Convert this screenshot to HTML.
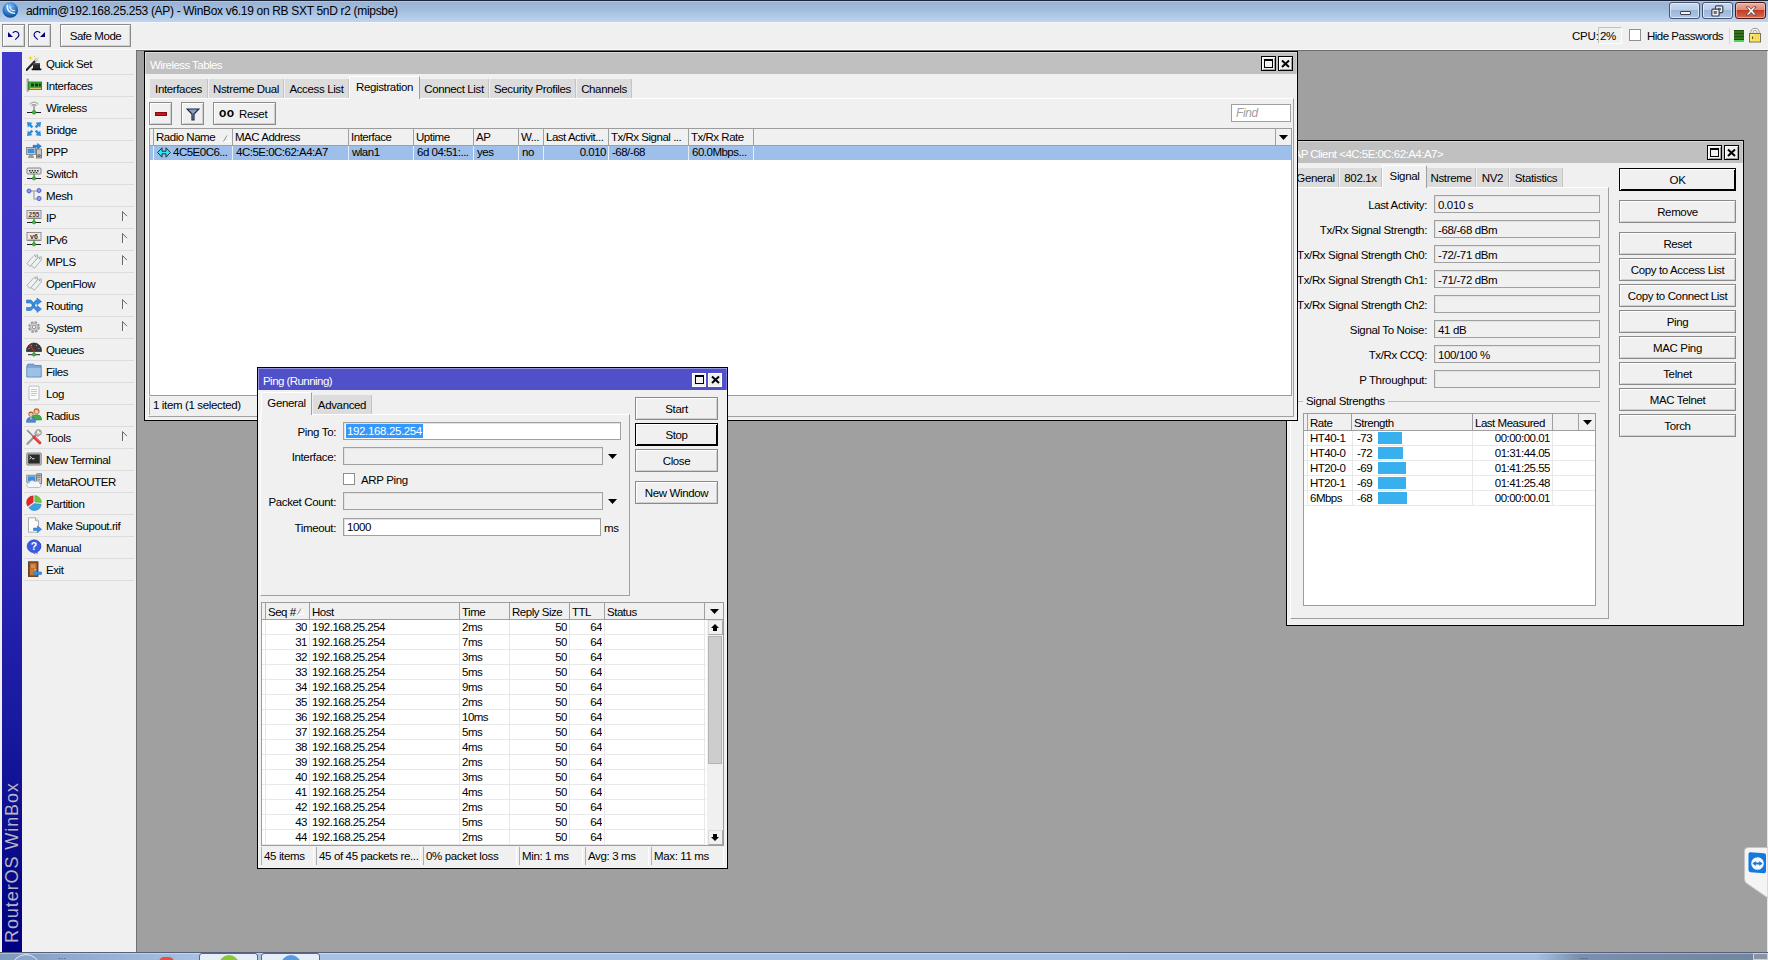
<!DOCTYPE html><html><head><meta charset="utf-8"><title>WinBox</title><style>
*{box-sizing:border-box;margin:0;padding:0}
html,body{width:1768px;height:960px;overflow:hidden}
body{position:relative;background:#a0a0a0;font-family:"Liberation Sans",sans-serif;font-size:11.5px;color:#000;line-height:13px;letter-spacing:-0.36px}
.a{position:absolute}
.t{position:absolute;white-space:nowrap}
.win{position:absolute;border:2px solid #f4f4f4;outline:1px solid #000;outline-offset:-1px;background:#f0f0f0}
.tb{position:absolute;left:-1px;right:-1px;top:-1px;height:22px;background:#c0c0c0;color:#fff;font-size:11.5px;box-shadow:inset 1px 1px 0 rgba(255,255,255,.4),inset -1px 0 0 rgba(255,255,255,.25)}
.tbtn{position:absolute;top:4px;width:15px;height:15px;border:1px solid #000;background:#f0f0f0;box-shadow:inset 1px 1px 0 #fff,inset -1px -1px 0 #a0a0a0}
.btn{position:absolute;border:1px solid #8a8a8a;background:#f0f0f0;box-shadow:inset 1px 1px 0 #fff, inset -1px -1px 0 #d0d0d0;text-align:center}
.tab{position:absolute;background:#dcdcdc;border-right:1px solid #c4c4c4;height:19px;padding-top:4px;text-align:center}
.tabsel{position:absolute;background:#f0f0f0;border-left:1px solid #fff;border-top:1px solid #fff;border-right:1px solid #a0a0a0;text-align:center}
.fld{position:absolute;border:1px solid #a0a0a0;background:#f0f0f0;height:18px;padding:2px 0 0 3px;box-shadow:inset 1px 1px 0 #e3e3e3}
.fldw{background:#fff}
.hdr{position:absolute;background:#f0f0f0;border-right:1px solid #a0a0a0;height:16px;letter-spacing:-0.48px;padding:2px 0 0 2px;overflow:hidden;white-space:nowrap}
.cell{position:absolute;height:15px;overflow:hidden;white-space:nowrap;padding-top:1px;letter-spacing:-0.5px}
.r{text-align:right}
</style></head><body>

<div class="a" style="left:0;top:0;width:1768px;height:22px;background:linear-gradient(#1a2436 0,#1a2436 1px,#b4c6de 1px,#b4c6de 2px,#98b3d4 2px,#a0bbdc 9px,#b0c9e8 16px,#bfd3ec 22px)"></div>
<svg class="a" style="left:2px;top:2px" width="17" height="17" viewBox="0 0 17 17"><defs><radialGradient id="lg" cx="45%" cy="30%" r="75%"><stop offset="0" stop-color="#8cc4f8"/><stop offset="0.55" stop-color="#2c7cd0"/><stop offset="1" stop-color="#0c3c80"/></radialGradient></defs><circle cx="8.3" cy="8" r="7.8" fill="url(#lg)"/><path d="M5.2 3.2 C4.6 8 7.5 11.2 12.6 11.4" fill="none" stroke="#f4faff" stroke-width="1.3" stroke-linecap="round"/><path d="M8 4.2 C7.8 7 9.8 8.8 12.8 8.8" fill="none" stroke="#e4f2ff" stroke-width="1.1" stroke-linecap="round"/></svg>
<div class="t" style="left:26px;top:4px;font-size:12px;line-height:15px;letter-spacing:-0.32px">admin@192.168.25.253 (AP) - WinBox v6.19 on RB SXT 5nD r2 (mipsbe)</div>


<div class="a" style="left:1669px;top:2px;width:31px;height:17px;border:1px solid #43526e;border-radius:3px;box-shadow:inset 0 0 0 1px rgba(235,243,252,.75);background:linear-gradient(#c9daf0,#b9cde9 48%,#9db6d8 48%,#adc6e6)"><div class="a" style="left:10px;top:8px;width:11px;height:4px;background:#f4f4f4;border:1px solid #3c4250;border-radius:1px"></div></div>
<div class="a" style="left:1702px;top:2px;width:31px;height:17px;border:1px solid #43526e;border-radius:3px;box-shadow:inset 0 0 0 1px rgba(235,243,252,.75);background:linear-gradient(#c9daf0,#b9cde9 48%,#9db6d8 48%,#adc6e6)"><svg class="a" style="left:8px;top:2px" width="13" height="12"><rect x="4.5" y="0.8" width="7.3" height="6.8" rx="1" fill="#f0f0f0" stroke="#3c4250" stroke-width="1.2"/><rect x="7.5" y="3.2" width="2" height="1.8" fill="#7a8698" stroke="#3c4250" stroke-width="0.6"/><rect x="0.8" y="4.2" width="7.3" height="6.8" rx="1" fill="#f0f0f0" stroke="#3c4250" stroke-width="1.2"/><rect x="3" y="6.6" width="2.6" height="2" fill="#7a8698" stroke="#3c4250" stroke-width="0.6"/></svg></div>
<div class="a" style="left:1735px;top:2px;width:31px;height:17px;border:1px solid #4c1814;border-radius:3px;box-shadow:inset 0 0 0 1px rgba(255,210,200,.55);background:linear-gradient(#eab0a2,#dd8672 48%,#c43a22 48%,#d66a50)"><svg class="a" style="left:9px;top:3px" width="13" height="10"><path d="M1.2 0.8 L4 0.8 L6.2 3.2 L8.4 0.8 L11.2 0.8 L7.8 4.8 L11.4 9 L8.4 9 L6.2 6.4 L4 9 L1 9 L4.6 4.8 Z" fill="#fbfbfb" stroke="#5a3a38" stroke-width="0.8"/></svg></div>


<div class="a" style="left:0;top:22px;width:1768px;height:28px;background:#f0f0f0"></div>
<div class="btn" style="left:2px;top:24px;width:23px;height:23px"><svg class="a" style="left:0;top:0" width="21" height="21"><path d="M5 7 L5 12 L10 12 Z" fill="#000080"/><path d="M9.8 8 C11 6.2 13.4 6 14.8 7.4 C16.4 9 16.2 10.8 14.6 12.4 L12.2 14.6" fill="none" stroke="#000080" stroke-width="1.15"/></svg></div>
<div class="btn" style="left:28px;top:24px;width:23px;height:23px"><svg class="a" style="left:0;top:0" width="21" height="21"><path d="M16 7 L16 12 L11 12 Z" fill="#000080"/><path d="M11.2 8 C10 6.2 7.6 6 6.2 7.4 C4.6 9 4.8 10.8 6.4 12.4 L8.8 14.6" fill="none" stroke="#000080" stroke-width="1.15"/></svg></div>
<div class="btn" style="left:60px;top:24px;width:71px;height:23px;padding-top:5px;font-size:11.5px;letter-spacing:-0.45px">Safe Mode</div>
<div class="a" style="left:1598px;top:27px;width:24px;height:17px;border:1px solid #c0c0c0;border-right-color:#fff;border-bottom-color:#fff"></div>
<div class="t" style="left:1572px;top:30px;letter-spacing:-0.2px">CPU:</div>
<div class="t" style="left:1600px;top:30px">2%</div>
<div class="a" style="left:1629px;top:29px;width:12px;height:12px;background:#fff;border:1px solid #8e8f8f"></div>
<div class="t" style="left:1647px;top:30px;letter-spacing:-0.5px">Hide Passwords</div>
<div class="a" style="left:1729px;top:28px;width:1px;height:16px;background:#d4d4dc"></div>
<div class="a" style="left:1734px;top:30px;width:10px;height:12px;background:repeating-linear-gradient(#1a5406 0,#1a5406 1px,#3a6e20 1px,#3a6e20 3px);border-bottom:2px solid #4fd64f"></div>
<svg class="a" style="left:1748px;top:27px" width="14" height="16"><path d="M3 7 L3 4.2 C3 0.6 11 0.6 11 4.2 L11 7" fill="none" stroke="#8a8a8a" stroke-width="1"/><path d="M5 7 L5 4.8 C5 2.8 9 2.8 9 4.8 L9 7" fill="none" stroke="#8a8a8a" stroke-width="1"/><path d="M4 7 L4 4.4 C4 1.8 10 1.8 10 4.4 L10 7" fill="none" stroke="#fff" stroke-width="1"/><rect x="1.5" y="6.5" width="11" height="8.5" fill="#fbe56c" stroke="#7a7258" stroke-width="1"/><rect x="7" y="7" width="1.2" height="7.5" fill="#f4d040"/><rect x="9.6" y="7" width="1.2" height="7.5" fill="#f4d040"/><rect x="4" y="9.5" width="1.2" height="2.6" fill="#6a5a10"/></svg>

<div class="a" style="left:0;top:50px;width:136px;height:902px;background:#f0f0f0"></div>
<div class="a" style="left:2px;top:52px;width:20px;height:900px;background:linear-gradient(#4038c8,#3830c0 40%,#1818a0 75%,#000080)"></div>
<div class="a" style="left:136px;top:50px;width:1px;height:902px;background:#727272"></div>
<div class="t" style="left:2px;top:943px;width:170px;height:20px;transform-origin:0 0;transform:rotate(-90deg);color:#b4b4d0;font-size:18px;line-height:20px;letter-spacing:0.92px;text-shadow:1px 1px 0 #10105a">RouterOS WinBox</div>
<div class="t" style="left:46px;top:58px;font-size:11.5px;letter-spacing:-0.42px">Quick Set</div>
<div class="a" style="left:24px;top:74px;width:110px;height:1px;background:#dcdcdc"></div>
<svg class="a" style="left:26px;top:55px" width="16" height="16" viewBox="0 0 16 16"><path d="M0.5 15 L10.5 4.5" stroke="#222" stroke-width="2.2" stroke-linecap="round"/><path d="M9.5 5.5 L12 3" stroke="#ddd" stroke-width="2" stroke-linecap="round"/>
<rect x="7" y="8.5" width="7" height="6" fill="#2a2a2a"/><rect x="5.5" y="13.5" width="10" height="1.8" rx="0.8" fill="#111"/><rect x="7" y="8" width="7" height="1.5" fill="#555"/>
<path d="M4.5 0.5 L5.2 2.3 L7 3 L5.2 3.7 L4.5 5.5 L3.8 3.7 L2 3 L3.8 2.3Z" fill="#f2d43a"/><circle cx="8.5" cy="1.5" r="0.8" fill="#f2d43a"/><circle cx="13" cy="6" r="0.7" fill="#e8e8a0"/></svg>
<div class="t" style="left:46px;top:80px;font-size:11.5px;letter-spacing:-0.42px">Interfaces</div>
<div class="a" style="left:24px;top:96px;width:110px;height:1px;background:#dcdcdc"></div>
<svg class="a" style="left:26px;top:77px" width="16" height="16" viewBox="0 0 16 16"><rect x="1" y="2" width="1.6" height="12.5" fill="#b8b8b8" stroke="#808080" stroke-width="0.5"/><rect x="2.6" y="5" width="13" height="7.5" fill="#3fae3f" stroke="#1c7a1c" stroke-width="0.8"/>
<rect x="5" y="6.5" width="3" height="3" fill="#1a3a1a"/><rect x="9" y="6.5" width="3" height="3" fill="#1a3a1a"/><rect x="12.8" y="6.5" width="2" height="3" fill="#1a3a1a"/><rect x="4" y="11" width="11" height="1.2" fill="#d8c860"/></svg>
<div class="t" style="left:46px;top:102px;font-size:11.5px;letter-spacing:-0.42px">Wireless</div>
<div class="a" style="left:24px;top:118px;width:110px;height:1px;background:#dcdcdc"></div>
<svg class="a" style="left:26px;top:99px" width="16" height="16" viewBox="0 0 16 16"><path d="M3.5 5.5 A5.5 5.5 0 0 1 12.5 5.5" fill="none" stroke="#aaa" stroke-width="1.2"/><path d="M5.5 6.8 A3.2 3.2 0 0 1 10.5 6.8" fill="none" stroke="#999" stroke-width="1.1"/>
<rect x="7.4" y="6.5" width="1.3" height="6" fill="#888"/><rect x="1" y="13" width="14" height="1" fill="#222"/><circle cx="8" cy="13.3" r="1.9" fill="#3cb83c" stroke="#1c7a1c" stroke-width="0.5"/></svg>
<div class="t" style="left:46px;top:124px;font-size:11.5px;letter-spacing:-0.42px">Bridge</div>
<div class="a" style="left:24px;top:140px;width:110px;height:1px;background:#dcdcdc"></div>
<svg class="a" style="left:26px;top:121px" width="16" height="16" viewBox="0 0 16 16"><g fill="#2b8ede"><path d="M1 1 L6.5 1.8 L5 3.3 L7.2 5.5 L5.5 7.2 L3.3 5 L1.8 6.5Z"/><path d="M15 1 L14.2 6.5 L12.7 5 L10.5 7.2 L8.8 5.5 L11 3.3 L9.5 1.8Z"/><path d="M1 15 L1.8 9.5 L3.3 11 L5.5 8.8 L7.2 10.5 L5 12.7 L6.5 14.2Z"/><path d="M15 15 L9.5 14.2 L11 12.7 L8.8 10.5 L10.5 8.8 L12.7 11 L14.2 9.5Z"/></g></svg>
<div class="t" style="left:46px;top:146px;font-size:11.5px;letter-spacing:-0.42px">PPP</div>
<div class="a" style="left:24px;top:162px;width:110px;height:1px;background:#dcdcdc"></div>
<svg class="a" style="left:26px;top:143px" width="16" height="16" viewBox="0 0 16 16"><rect x="0.5" y="4.5" width="9" height="7" fill="#d8d8d8" stroke="#777" stroke-width="0.8"/><rect x="1.6" y="5.6" width="6.8" height="4.6" fill="#3a8fe0"/><rect x="3" y="12" width="4" height="1.5" fill="#999"/><rect x="2" y="13.5" width="6" height="1.2" fill="#777"/>
<rect x="10.5" y="6" width="5" height="9" fill="#c8c8c8" stroke="#666" stroke-width="0.8"/><rect x="11.5" y="11.5" width="3" height="2.3" fill="#4a4a4a"/><rect x="12" y="12.2" width="2" height="0.8" fill="#5cc85c"/>
<path d="M7 2.2 L11.5 2.2 L11.5 0.4 L15.5 3.2 L11.5 6 L11.5 4.2 L7 4.2Z" fill="#2f7fd6" stroke="#1a5aa8" stroke-width="0.4"/></svg>
<div class="t" style="left:46px;top:168px;font-size:11.5px;letter-spacing:-0.42px">Switch</div>
<div class="a" style="left:24px;top:184px;width:110px;height:1px;background:#dcdcdc"></div>
<svg class="a" style="left:26px;top:165px" width="16" height="16" viewBox="0 0 16 16"><rect x="1" y="3" width="14" height="6" rx="1" fill="#e4e4e4" stroke="#777" stroke-width="0.9"/><g fill="#333"><rect x="3" y="5" width="1.5" height="1.5"/><rect x="5.7" y="5" width="1.5" height="1.5"/><rect x="8.4" y="5" width="1.5" height="1.5"/><rect x="11.1" y="5" width="1.5" height="1.5"/><rect x="4.3" y="7" width="1.5" height="1"/><rect x="7" y="7" width="1.5" height="1"/><rect x="9.8" y="7" width="1.5" height="1"/></g>
<rect x="7.4" y="9" width="1.3" height="4" fill="#2c9c2c"/><rect x="1" y="13" width="14" height="1" fill="#222"/><circle cx="8" cy="13.4" r="1.7" fill="#3cb83c" stroke="#1c7a1c" stroke-width="0.5"/></svg>
<div class="t" style="left:46px;top:190px;font-size:11.5px;letter-spacing:-0.42px">Mesh</div>
<div class="a" style="left:24px;top:206px;width:110px;height:1px;background:#dcdcdc"></div>
<svg class="a" style="left:26px;top:187px" width="16" height="16" viewBox="0 0 16 16"><path d="M3 4 L12.5 4 M8 4 L8 12 L12.5 12" fill="none" stroke="#999" stroke-width="1.1"/><circle cx="3" cy="4" r="2" fill="#8c9cf0" stroke="#4858c8" stroke-width="0.9"/><circle cx="13" cy="3.5" r="2" fill="#8c9cf0" stroke="#4858c8" stroke-width="0.9"/><circle cx="13" cy="11.5" r="2.1" fill="#8c9cf0" stroke="#4858c8" stroke-width="0.9"/></svg>
<div class="t" style="left:46px;top:212px;font-size:11.5px;letter-spacing:-0.42px">IP</div>
<div class="a" style="left:24px;top:228px;width:110px;height:1px;background:#dcdcdc"></div>
<svg class="a" style="left:26px;top:209px" width="16" height="16" viewBox="0 0 16 16"><rect x="1" y="1.5" width="14" height="8" fill="#ececec" stroke="#888" stroke-width="0.9"/><text x="8" y="8" font-family="Liberation Sans" font-size="6.5" font-weight="bold" text-anchor="middle" fill="#444" letter-spacing="0">255</text><rect x="2" y="8.6" width="12" height="0.8" fill="#777"/>
<rect x="7.4" y="9.5" width="1.3" height="3.5" fill="#2c9c2c"/><rect x="1" y="13" width="14" height="1" fill="#222"/><circle cx="8" cy="13.3" r="1.7" fill="#3cb83c" stroke="#1c7a1c" stroke-width="0.5"/></svg>
<svg class="a" style="left:122px;top:211px" width="6" height="11"><path d="M0.5 10.2 L5 5.4" fill="none" stroke="#fff" stroke-width="1"/><path d="M0.5 10 L0.5 0.5 L5 5.2" fill="none" stroke="#686868" stroke-width="1"/></svg>
<div class="t" style="left:46px;top:234px;font-size:11.5px;letter-spacing:-0.42px">IPv6</div>
<div class="a" style="left:24px;top:250px;width:110px;height:1px;background:#dcdcdc"></div>
<svg class="a" style="left:26px;top:231px" width="16" height="16" viewBox="0 0 16 16"><rect x="1" y="1.5" width="14" height="8" fill="#ececec" stroke="#888" stroke-width="0.9"/><text x="8" y="7.6" font-family="Liberation Sans" font-size="7" font-weight="bold" text-anchor="middle" fill="#333" letter-spacing="0">v6</text><rect x="2" y="8.6" width="12" height="0.8" fill="#777"/>
<rect x="7.4" y="9.5" width="1.3" height="3.5" fill="#2c9c2c"/><rect x="1" y="13" width="14" height="1" fill="#222"/><circle cx="8" cy="13.3" r="1.7" fill="#3cb83c" stroke="#1c7a1c" stroke-width="0.5"/></svg>
<svg class="a" style="left:122px;top:233px" width="6" height="11"><path d="M0.5 10.2 L5 5.4" fill="none" stroke="#fff" stroke-width="1"/><path d="M0.5 10 L0.5 0.5 L5 5.2" fill="none" stroke="#686868" stroke-width="1"/></svg>
<div class="t" style="left:46px;top:256px;font-size:11.5px;letter-spacing:-0.42px">MPLS</div>
<div class="a" style="left:24px;top:272px;width:110px;height:1px;background:#dcdcdc"></div>
<svg class="a" style="left:26px;top:253px" width="16" height="16" viewBox="0 0 16 16"><g fill="#eef2f2" stroke="#9aa4a4" stroke-width="0.8"><path d="M0.8 10.5 L8 2.5 L11.5 1.8 L11.5 5 L4.5 13.5Z"/><path d="M5 12.5 L12 4.5 L15.3 3.8 L15.3 7 L8.5 15.2Z"/></g><circle cx="9.8" cy="3.6" r="0.7" fill="#888"/><circle cx="13.7" cy="5.6" r="0.7" fill="#888"/></svg>
<svg class="a" style="left:122px;top:255px" width="6" height="11"><path d="M0.5 10.2 L5 5.4" fill="none" stroke="#fff" stroke-width="1"/><path d="M0.5 10 L0.5 0.5 L5 5.2" fill="none" stroke="#686868" stroke-width="1"/></svg>
<div class="t" style="left:46px;top:278px;font-size:11.5px;letter-spacing:-0.42px">OpenFlow</div>
<div class="a" style="left:24px;top:294px;width:110px;height:1px;background:#dcdcdc"></div>
<svg class="a" style="left:26px;top:275px" width="16" height="16" viewBox="0 0 16 16"><g fill="#eef2f2" stroke="#9aa4a4" stroke-width="0.8"><path d="M0.8 10.5 L8 2.5 L11.5 1.8 L11.5 5 L4.5 13.5Z"/><path d="M5 12.5 L12 4.5 L15.3 3.8 L15.3 7 L8.5 15.2Z"/></g><circle cx="9.8" cy="3.6" r="0.7" fill="#888"/><circle cx="13.7" cy="5.6" r="0.7" fill="#888"/></svg>
<div class="t" style="left:46px;top:300px;font-size:11.5px;letter-spacing:-0.42px">Routing</div>
<div class="a" style="left:24px;top:316px;width:110px;height:1px;background:#dcdcdc"></div>
<svg class="a" style="left:26px;top:297px" width="16" height="16" viewBox="0 0 16 16"><g fill="#3a8ee0" stroke="#1c62b4" stroke-width="0.5"><path d="M0.5 3 L4.5 3 C7 3 8.5 10.5 11 10.5 L11 8.5 L15.5 12 L11 15.5 L11 13.5 C7.5 13.5 6.5 6 4 6 L0.5 6Z"/><path d="M0.5 10.5 L4 10.5 C6.5 10.5 7.5 3 11 3 L11 1 L15.5 4.5 L11 8 L11 6 C8.5 6 7 13.5 4.5 13.5 L0.5 13.5Z"/></g></svg>
<svg class="a" style="left:122px;top:299px" width="6" height="11"><path d="M0.5 10.2 L5 5.4" fill="none" stroke="#fff" stroke-width="1"/><path d="M0.5 10 L0.5 0.5 L5 5.2" fill="none" stroke="#686868" stroke-width="1"/></svg>
<div class="t" style="left:46px;top:322px;font-size:11.5px;letter-spacing:-0.42px">System</div>
<div class="a" style="left:24px;top:338px;width:110px;height:1px;background:#dcdcdc"></div>
<svg class="a" style="left:26px;top:319px" width="16" height="16" viewBox="0 0 16 16"><g fill="none" stroke="#9a9a9a"><circle cx="8" cy="8" r="4.6" stroke-width="2.6" stroke-dasharray="2.4 1.2"/><circle cx="8" cy="8" r="3.6" stroke-width="1.6" stroke="#b4b4b4"/><circle cx="8" cy="8" r="1.8" stroke-width="1" stroke="#8a8a8a"/></g></svg>
<svg class="a" style="left:122px;top:321px" width="6" height="11"><path d="M0.5 10.2 L5 5.4" fill="none" stroke="#fff" stroke-width="1"/><path d="M0.5 10 L0.5 0.5 L5 5.2" fill="none" stroke="#686868" stroke-width="1"/></svg>
<div class="t" style="left:46px;top:344px;font-size:11.5px;letter-spacing:-0.42px">Queues</div>
<div class="a" style="left:24px;top:360px;width:110px;height:1px;background:#dcdcdc"></div>
<svg class="a" style="left:26px;top:341px" width="16" height="16" viewBox="0 0 16 16"><path d="M0.5 9.5 A7.5 7.5 0 0 1 15.5 9.5 L15.5 10.5 L0.5 10.5Z" fill="#3a3a3a" stroke="#111" stroke-width="0.6"/><path d="M8 9.8 L3.5 4" stroke="#e02020" stroke-width="1.3"/><g fill="#ccc"><circle cx="3" cy="7.5" r="0.5"/><circle cx="5.5" cy="4.3" r="0.5"/><circle cx="10.5" cy="4.3" r="0.5"/><circle cx="13" cy="7.5" r="0.5"/></g>
<rect x="7.4" y="10.5" width="1.3" height="2.5" fill="#2c9c2c"/><rect x="2" y="13.2" width="12" height="1" fill="#222"/><circle cx="8" cy="13.5" r="1.7" fill="#3cb83c" stroke="#1c7a1c" stroke-width="0.5"/></svg>
<div class="t" style="left:46px;top:366px;font-size:11.5px;letter-spacing:-0.42px">Files</div>
<div class="a" style="left:24px;top:382px;width:110px;height:1px;background:#dcdcdc"></div>
<svg class="a" style="left:26px;top:363px" width="16" height="16" viewBox="0 0 16 16"><path d="M0.8 3.2 L0.8 14 L15.2 14 L15.2 2.5 L9 2.5 L7.5 1.2 L1.8 1.2 Z" fill="#7da7d4" stroke="#4a78ac" stroke-width="0.8"/><path d="M1.3 5 L14.7 5 L14.7 13.5 L1.3 13.5Z" fill="#9cc0e6"/></svg>
<div class="t" style="left:46px;top:388px;font-size:11.5px;letter-spacing:-0.42px">Log</div>
<div class="a" style="left:24px;top:404px;width:110px;height:1px;background:#dcdcdc"></div>
<svg class="a" style="left:26px;top:385px" width="16" height="16" viewBox="0 0 16 16"><path d="M3 1.5 L4 0.8 L5 1.5 L6 0.8 L7 1.5 L8 0.8 L9 1.5 L10 0.8 L11 1.5 L12 0.8 L13 1.5 L13 14.5 L12 15.2 L11 14.5 L10 15.2 L9 14.5 L8 15.2 L7 14.5 L6 15.2 L5 14.5 L4 15.2 L3 14.5Z" fill="#fafafa" stroke="#a8a8a8" stroke-width="0.7"/><g stroke="#b8b8c0" stroke-width="0.8"><path d="M5 4.5 L11 4.5 M5 6.5 L11 6.5 M5 8.5 L11 8.5 M5 10.5 L9.5 10.5"/></g></svg>
<div class="t" style="left:46px;top:410px;font-size:11.5px;letter-spacing:-0.42px">Radius</div>
<div class="a" style="left:24px;top:426px;width:110px;height:1px;background:#dcdcdc"></div>
<svg class="a" style="left:26px;top:407px" width="16" height="16" viewBox="0 0 16 16"><circle cx="10.5" cy="4.2" r="3" fill="#c06828"/><circle cx="10.5" cy="4.8" r="2" fill="#f0c8a0"/><path d="M5.5 13 C5.5 9 8 7.8 10.5 7.8 C13 7.8 15.5 9 15.5 12 L15.5 13Z" fill="#3fae4a" stroke="#1e7a2a" stroke-width="0.5"/>
<circle cx="5" cy="7" r="2.6" fill="#a85a20"/><circle cx="5" cy="7.6" r="1.8" fill="#f0c8a0"/><path d="M0.5 15.3 C0.5 11.5 2.5 10.3 5 10.3 C7.5 10.3 9.5 11.5 9.5 15.3Z" fill="#4a8ad8" stroke="#2a5aa8" stroke-width="0.5"/><path d="M4.4 10.5 L5 13 L5.6 10.5Z" fill="#fff"/></svg>
<div class="t" style="left:46px;top:432px;font-size:11.5px;letter-spacing:-0.42px">Tools</div>
<div class="a" style="left:24px;top:448px;width:110px;height:1px;background:#dcdcdc"></div>
<svg class="a" style="left:26px;top:429px" width="16" height="16" viewBox="0 0 16 16"><path d="M1.5 14.8 L10 6" stroke="#9a9a9a" stroke-width="2.2" stroke-linecap="round"/><path d="M9.5 3 A3 3 0 1 1 13 6.5 L11.5 7.5 L8.5 4.5Z" fill="#b0b0b0" stroke="#777" stroke-width="0.6"/><path d="M12 1.5 L12 4 L14.5 4" fill="none" stroke="#f0f0f0" stroke-width="1.6"/>
<path d="M1.5 1.5 L8 8" stroke="#888" stroke-width="1.6" stroke-linecap="round"/><path d="M8 8 L13.8 13.8" stroke="#e03030" stroke-width="3" stroke-linecap="round"/><path d="M8.6 8 L14 13.4" stroke="#f08080" stroke-width="0.8"/></svg>
<svg class="a" style="left:122px;top:431px" width="6" height="11"><path d="M0.5 10.2 L5 5.4" fill="none" stroke="#fff" stroke-width="1"/><path d="M0.5 10 L0.5 0.5 L5 5.2" fill="none" stroke="#686868" stroke-width="1"/></svg>
<div class="t" style="left:46px;top:454px;font-size:11.5px;letter-spacing:-0.42px">New Terminal</div>
<div class="a" style="left:24px;top:470px;width:110px;height:1px;background:#dcdcdc"></div>
<svg class="a" style="left:26px;top:451px" width="16" height="16" viewBox="0 0 16 16"><rect x="0.8" y="2" width="14.4" height="12" rx="0.8" fill="#c8c8c8" stroke="#6a6a6a" stroke-width="0.8"/><rect x="2.2" y="3.4" width="11.6" height="9.2" fill="#2a2a2a"/><path d="M3.5 5 L5.5 6.5 L3.5 8" fill="none" stroke="#fff" stroke-width="0.9"/><rect x="6" y="7.3" width="2.5" height="0.9" fill="#fff"/></svg>
<div class="t" style="left:46px;top:476px;font-size:11.5px;letter-spacing:-0.42px">MetaROUTER</div>
<div class="a" style="left:24px;top:492px;width:110px;height:1px;background:#dcdcdc"></div>
<svg class="a" style="left:26px;top:473px" width="16" height="16" viewBox="0 0 16 16"><rect x="0.8" y="2.2" width="9.5" height="7" fill="#d8d8d8" stroke="#777" stroke-width="0.8"/><rect x="1.9" y="3.3" width="7.3" height="4.8" fill="#3a8fe0"/><rect x="10.8" y="0.8" width="4.6" height="10" fill="#c4c4c4" stroke="#666" stroke-width="0.8"/><path d="M11.6 2.5 L14.6 2.5 M11.6 4.2 L14.6 4.2" stroke="#666" stroke-width="0.8"/><rect x="12.5" y="6" width="1.4" height="1.4" fill="#c88020"/>
<path d="M2.5 14.5 A2.4 2.4 0 0 1 3.2 9.8 A3.2 3.2 0 0 1 9 9 A2.8 2.8 0 0 1 13.8 10.8 A2 2 0 0 1 13.5 14.5Z" fill="#f4f6fa" stroke="#a0a8b8" stroke-width="0.7"/></svg>
<div class="t" style="left:46px;top:498px;font-size:11.5px;letter-spacing:-0.42px">Partition</div>
<div class="a" style="left:24px;top:514px;width:110px;height:1px;background:#dcdcdc"></div>
<svg class="a" style="left:26px;top:495px" width="16" height="16" viewBox="0 0 16 16"><path d="M7.2 7.2 L7.2 0.8 A6.6 6.6 0 0 0 1.8 11.2Z" fill="#e02828" stroke="#a81818" stroke-width="0.4"/><path d="M8.8 7 L8.8 0.6 A6.8 6.8 0 0 1 15.4 7.6Z" fill="#6cc83c" stroke="#3c9018" stroke-width="0.4"/><path d="M8.2 8.6 L15.2 9.2 A6.8 6.8 0 0 1 2.8 12.6Z" fill="#3aa0e0" stroke="#1c70b0" stroke-width="0.4"/></svg>
<div class="t" style="left:46px;top:520px;font-size:11.5px;letter-spacing:-0.42px">Make Supout.rif</div>
<div class="a" style="left:24px;top:536px;width:110px;height:1px;background:#dcdcdc"></div>
<svg class="a" style="left:26px;top:517px" width="16" height="16" viewBox="0 0 16 16"><path d="M2.5 0.8 L9.5 0.8 L12.5 3.8 L12.5 15.2 L2.5 15.2Z" fill="#fbfbfb" stroke="#9a9a9a" stroke-width="0.8"/><path d="M9.5 0.8 L9.5 3.8 L12.5 3.8" fill="#e0e0e0" stroke="#9a9a9a" stroke-width="0.7"/><path d="M7.5 11 L11.5 11 L11.5 9 L15.6 12.2 L11.5 15.4 L11.5 13.4 L7.5 13.4Z" fill="#3a90e4" stroke="#1c62b4" stroke-width="0.5"/></svg>
<div class="t" style="left:46px;top:542px;font-size:11.5px;letter-spacing:-0.42px">Manual</div>
<div class="a" style="left:24px;top:558px;width:110px;height:1px;background:#dcdcdc"></div>
<svg class="a" style="left:26px;top:539px" width="16" height="16" viewBox="0 0 16 16"><path d="M8 0.8 A6.8 6.4 0 1 1 5.5 13 L9.5 15.6 L9 13.4 A6.8 6.4 0 0 0 8 0.8Z" fill="#3858d8"/><ellipse cx="8" cy="7.2" rx="6.9" ry="6.4" fill="#3a5ce0" stroke="#2038a8" stroke-width="0.5"/><path d="M9 12.5 L11.5 15.6 L11.5 12.2Z" fill="#3a5ce0"/><text x="8" y="11.2" font-family="Liberation Sans" font-weight="bold" font-size="10.5" text-anchor="middle" fill="#fff" letter-spacing="0">?</text></svg>
<div class="t" style="left:46px;top:564px;font-size:11.5px;letter-spacing:-0.42px">Exit</div>
<div class="a" style="left:24px;top:580px;width:110px;height:1px;background:#dcdcdc"></div>
<svg class="a" style="left:26px;top:561px" width="16" height="16" viewBox="0 0 16 16"><rect x="2.5" y="0.8" width="9.5" height="14.6" fill="#8a4a20" stroke="#5a2c10" stroke-width="0.8"/><rect x="4" y="2.2" width="6.5" height="12" fill="#c87838"/><rect x="4.8" y="3" width="4.9" height="4.5" fill="#d88c48" stroke="#a05a24" stroke-width="0.4"/><circle cx="9.3" cy="8.8" r="0.8" fill="#f0e080"/>
<path d="M15.5 11 L11 11 L11 9.2 L7 12.2 L11 15.2 L11 13.4 L15.5 13.4Z" fill="#3a90e4" stroke="#1c62b4" stroke-width="0.5"/></svg>
<div class="win" style="left:1286px;top:140px;width:458px;height:486px">
<div class="tb"><div class="t" style="left:6.5px;top:7px;letter-spacing:-0.52px">AP Client &lt;4C:5E:0C:62:A4:A7&gt;</div></div>
<div class="tbtn" style="left:419px;top:3px"><svg class="a" style="left:2px;top:2px" width="9" height="9"><rect x="0.5" y="1" width="8" height="7.5" fill="none" stroke="#000" stroke-width="1"/><rect x="0" y="0" width="9" height="2" fill="#000"/></svg></div><div class="tbtn" style="left:436px;top:3px"><svg class="a" style="left:2px;top:2px" width="9" height="9"><path d="M1 1.5 L8 8 M8 1.5 L1 8" stroke="#000" stroke-width="2"/></svg></div>
<div class="a" style="left:2px;top:45px;width:319px;height:432px;border:1px solid #a0a0a0;border-left-color:#fff;border-top-color:#fff;background:#f0f0f0"></div>
<div class="tab" style="left:5px;top:26px;width:46px">General</div>
<div class="tab" style="left:52px;top:26px;width:42px">802.1x</div>
<div class="tabsel" style="left:94px;top:23px;width:45px;height:23px;padding-top:4px">Signal</div>
<div class="tab" style="left:139px;top:26px;width:49px">Nstreme</div>
<div class="tab" style="left:189px;top:26px;width:32px">NV2</div>
<div class="tab" style="left:222px;top:26px;width:53px">Statistics</div>
<div class="t r" style="left:2px;width:137px;top:57px">Last Activity:</div>
<div class="fld" style="left:146px;top:53px;width:166px;padding-top:3px">0.010 s</div>
<div class="t r" style="left:2px;width:137px;top:82px">Tx/Rx Signal Strength:</div>
<div class="fld" style="left:146px;top:78px;width:166px;padding-top:3px">-68/-68 dBm</div>
<div class="t r" style="left:2px;width:137px;top:107px">Tx/Rx Signal Strength Ch0:</div>
<div class="fld" style="left:146px;top:103px;width:166px;padding-top:3px">-72/-71 dBm</div>
<div class="t r" style="left:2px;width:137px;top:132px">Tx/Rx Signal Strength Ch1:</div>
<div class="fld" style="left:146px;top:128px;width:166px;padding-top:3px">-71/-72 dBm</div>
<div class="t r" style="left:2px;width:137px;top:157px">Tx/Rx Signal Strength Ch2:</div>
<div class="fld" style="left:146px;top:153px;width:166px;padding-top:3px"></div>
<div class="t r" style="left:2px;width:137px;top:182px">Signal To Noise:</div>
<div class="fld" style="left:146px;top:178px;width:166px;padding-top:3px">41 dB</div>
<div class="t r" style="left:2px;width:137px;top:207px">Tx/Rx CCQ:</div>
<div class="fld" style="left:146px;top:203px;width:166px;padding-top:3px">100/100 %</div>
<div class="t r" style="left:2px;width:137px;top:232px">P Throughput:</div>
<div class="fld" style="left:146px;top:228px;width:166px;padding-top:3px"></div>
<div class="a" style="left:10px;top:259px;width:302px;height:1px;background:#bdbdbd"></div>
<div class="t" style="left:15px;top:253px;background:#f0f0f0;padding:0 3px">Signal Strengths</div>
<div class="a" style="left:15px;top:271px;width:293px;height:193px;border:1px solid #9c9c9c;background:#fff"></div>
<div class="a" style="left:16px;top:272px;width:291px;height:17px;background:#f0f0f0;border-bottom:1px solid #a0a0a0"></div>
<div class="hdr" style="left:16px;top:272px;width:4px;padding-top:3px"></div>
<div class="hdr" style="left:20px;top:272px;width:44px;padding-top:3px">Rate</div>
<div class="hdr" style="left:64px;top:272px;width:121px;padding-top:3px">Strength</div>
<div class="hdr" style="left:185px;top:272px;width:80px;padding-top:3px">Last Measured</div>
<div class="hdr" style="left:265px;top:272px;width:26px;padding-top:3px"></div>
<svg class="a" style="left:295px;top:278px" width="9" height="5"><path d="M0 0 L9 0 L4.5 5 Z" fill="#000"/></svg>
<div class="a" style="left:16px;top:303px;width:291px;height:1px;background:#e8e8e8"></div>
<div class="cell" style="left:22px;top:289px;width:42px">HT40-1</div>
<div class="cell" style="left:69px;top:289px;width:20px">-73</div>
<div class="a" style="left:90px;top:290px;width:24px;height:12px;background:#38b0ee"></div>
<div class="cell r" style="left:186px;top:289px;width:76px">00:00:00.01</div>
<div class="a" style="left:16px;top:318px;width:291px;height:1px;background:#e8e8e8"></div>
<div class="cell" style="left:22px;top:304px;width:42px">HT40-0</div>
<div class="cell" style="left:69px;top:304px;width:20px">-72</div>
<div class="a" style="left:90px;top:305px;width:25px;height:12px;background:#38b0ee"></div>
<div class="cell r" style="left:186px;top:304px;width:76px">01:31:44.05</div>
<div class="a" style="left:16px;top:333px;width:291px;height:1px;background:#e8e8e8"></div>
<div class="cell" style="left:22px;top:319px;width:42px">HT20-0</div>
<div class="cell" style="left:69px;top:319px;width:20px">-69</div>
<div class="a" style="left:90px;top:320px;width:28px;height:12px;background:#38b0ee"></div>
<div class="cell r" style="left:186px;top:319px;width:76px">01:41:25.55</div>
<div class="a" style="left:16px;top:348px;width:291px;height:1px;background:#e8e8e8"></div>
<div class="cell" style="left:22px;top:334px;width:42px">HT20-1</div>
<div class="cell" style="left:69px;top:334px;width:20px">-69</div>
<div class="a" style="left:90px;top:335px;width:28px;height:12px;background:#38b0ee"></div>
<div class="cell r" style="left:186px;top:334px;width:76px">01:41:25.48</div>
<div class="a" style="left:16px;top:363px;width:291px;height:1px;background:#e8e8e8"></div>
<div class="cell" style="left:22px;top:349px;width:42px">6Mbps</div>
<div class="cell" style="left:69px;top:349px;width:20px">-68</div>
<div class="a" style="left:90px;top:350px;width:29px;height:12px;background:#38b0ee"></div>
<div class="cell r" style="left:186px;top:349px;width:76px">00:00:00.01</div>
<div class="a" style="left:19px;top:289px;width:1px;height:75px;background:#e8e8e8"></div>
<div class="a" style="left:64px;top:289px;width:1px;height:75px;background:#e8e8e8"></div>
<div class="a" style="left:184px;top:289px;width:1px;height:75px;background:#e8e8e8"></div>
<div class="a" style="left:264px;top:289px;width:1px;height:75px;background:#e8e8e8"></div>
<div class="btn" style="left:331px;top:26px;width:117px;height:23px;padding-top:5px;border-color:#000;box-shadow:inset 1px 1px 0 #fff,inset -1px -1px 0 #000;">OK</div>
<div class="btn" style="left:331px;top:58px;width:117px;height:23px;padding-top:5px;">Remove</div>
<div class="btn" style="left:331px;top:90px;width:117px;height:23px;padding-top:5px;">Reset</div>
<div class="btn" style="left:331px;top:116px;width:117px;height:23px;padding-top:5px;">Copy to Access List</div>
<div class="btn" style="left:331px;top:142px;width:117px;height:23px;padding-top:5px;">Copy to Connect List</div>
<div class="btn" style="left:331px;top:168px;width:117px;height:23px;padding-top:5px;">Ping</div>
<div class="btn" style="left:331px;top:194px;width:117px;height:23px;padding-top:5px;">MAC Ping</div>
<div class="btn" style="left:331px;top:220px;width:117px;height:23px;padding-top:5px;">Telnet</div>
<div class="btn" style="left:331px;top:246px;width:117px;height:23px;padding-top:5px;">MAC Telnet</div>
<div class="btn" style="left:331px;top:272px;width:117px;height:23px;padding-top:5px;">Torch</div>
</div>
<div class="win" style="left:144px;top:51px;width:1154px;height:370px">
<div class="tb"><div class="t" style="left:5px;top:7px;letter-spacing:-0.55px">Wireless Tables</div></div>
<div class="tbtn" style="left:1115px;top:3px"><svg class="a" style="left:2px;top:2px" width="9" height="9"><rect x="0.5" y="1" width="8" height="7.5" fill="none" stroke="#000" stroke-width="1"/><rect x="0" y="0" width="9" height="2" fill="#000"/></svg></div><div class="tbtn" style="left:1132px;top:3px"><svg class="a" style="left:2px;top:2px" width="9" height="9"><path d="M1 1.5 L8 8 M8 1.5 L1 8" stroke="#000" stroke-width="2"/></svg></div>
<div class="a" style="left:2px;top:45px;width:1146px;height:319px;border:1px solid #a0a0a0;border-left-color:#fff;border-top-color:#fff;background:#f0f0f0"></div>
<div class="tab" style="left:4px;top:26px;width:58px">Interfaces</div>
<div class="tab" style="left:63px;top:26px;width:75px">Nstreme Dual</div>
<div class="tab" style="left:139px;top:26px;width:64px">Access List</div>
<div class="tabsel" style="left:203px;top:23px;width:71px;height:23px;padding-top:4px">Registration</div>
<div class="tab" style="left:274px;top:26px;width:69px">Connect List</div>
<div class="tab" style="left:344px;top:26px;width:86px">Security Profiles</div>
<div class="tab" style="left:431px;top:26px;width:55px">Channels</div>
<div class="btn" style="left:3px;top:49px;width:23px;height:23px"><div class="a" style="left:5px;top:9px;width:12px;height:4px;background:#c8141e;border:1px solid #8a0a10"></div></div>
<div class="btn" style="left:35px;top:49px;width:23px;height:23px"><svg class="a" style="left:4px;top:5px" width="14" height="13"><path d="M1 1 L13 1 L8 6 L8 12 L6 12 L6 6 Z" fill="#8aa0c8" stroke="#202840" stroke-width="1.2"/></svg></div>
<div class="btn" style="left:67px;top:49px;width:63px;height:23px;text-align:left"><span class="t" style="left:5px;top:4px;font-weight:bold;font-size:12px;letter-spacing:0.3px">oo</span><span class="t" style="left:25px;top:5px">Reset</span></div>
<div class="a" style="left:1085px;top:51px;width:60px;height:18px;border:1px solid #a0a0a0;background:#fff"><span class="t" style="left:4px;top:2px;font-style:italic;color:#a0a0a0;font-size:12px">Find</span></div>
<div class="a" style="left:3px;top:75px;width:1143px;height:268px;border:1px solid #9c9c9c;background:#fff"></div>
<div class="a" style="left:4px;top:76px;width:1141px;height:17px;background:#f0f0f0;border-bottom:1px solid #a0a0a0"></div>
<div class="hdr" style="left:4px;top:76px;width:4px;height:16px"></div>
<div class="hdr" style="left:8px;top:76px;width:79px;height:16px">Radio Name</div>
<div class="hdr" style="left:87px;top:76px;width:116px;height:16px">MAC Address</div>
<div class="hdr" style="left:203px;top:76px;width:65px;height:16px">Interface</div>
<div class="hdr" style="left:268px;top:76px;width:60px;height:16px">Uptime</div>
<div class="hdr" style="left:328px;top:76px;width:45px;height:16px">AP</div>
<div class="hdr" style="left:373px;top:76px;width:25px;height:16px">W...</div>
<div class="hdr" style="left:398px;top:76px;width:65px;height:16px">Last Activit...</div>
<div class="hdr" style="left:463px;top:76px;width:80px;height:16px">Tx/Rx Signal ...</div>
<div class="hdr" style="left:543px;top:76px;width:65px;height:16px">Tx/Rx Rate</div>
<div class="hdr" style="left:608px;top:76px;width:522px;height:16px"></div>
<svg class="a" style="left:1133px;top:82px" width="9" height="5"><path d="M0 0 L9 0 L4.5 5 Z" fill="#000"/></svg>
<div class="a" style="left:4px;top:93px;width:1141px;height:14px;background:#9dbfea"></div>
<svg class="a" style="left:11px;top:94px" width="14" height="11"><path d="M0.6 5.5 L5 0.8 L5 4.2 L9 4.2 L9 0.8 L13.4 5.5 L9 10.2 L9 6.8 L5 6.8 L5 10.2 Z" fill="#30e8f0" stroke="#102030" stroke-width="0.9"/></svg>
<svg class="a" style="left:77px;top:82px" width="8" height="7"><path d="M0.5 6.5 L7.5 6.5 L4 0.5" fill="none" stroke="#fff" stroke-width="1"/><path d="M0.5 6.5 L4 0.5" fill="none" stroke="#909090" stroke-width="1"/></svg>
<div class="a" style="left:7px;top:93px;width:1px;height:14px;background:#e8eef8"></div>
<div class="cell" style="left:8px;top:93px;width:78px;padding-left:19px;padding-top:0;">4C5E0C6...</div>
<div class="a" style="left:86px;top:93px;width:1px;height:14px;background:#e8eef8"></div>
<div class="cell" style="left:87px;top:93px;width:115px;padding-left:3px;padding-top:0;">4C:5E:0C:62:A4:A7</div>
<div class="a" style="left:202px;top:93px;width:1px;height:14px;background:#e8eef8"></div>
<div class="cell" style="left:203px;top:93px;width:64px;padding-left:3px;padding-top:0;">wlan1</div>
<div class="a" style="left:267px;top:93px;width:1px;height:14px;background:#e8eef8"></div>
<div class="cell" style="left:268px;top:93px;width:59px;padding-left:3px;padding-top:0;">6d 04:51:...</div>
<div class="a" style="left:327px;top:93px;width:1px;height:14px;background:#e8eef8"></div>
<div class="cell" style="left:328px;top:93px;width:44px;padding-left:3px;padding-top:0;">yes</div>
<div class="a" style="left:372px;top:93px;width:1px;height:14px;background:#e8eef8"></div>
<div class="cell" style="left:373px;top:93px;width:24px;padding-left:3px;padding-top:0;">no</div>
<div class="a" style="left:397px;top:93px;width:1px;height:14px;background:#e8eef8"></div>
<div class="cell" style="left:398px;top:93px;width:64px;padding-left:3px;padding-top:0;text-align:right;padding-right:2px;">0.010</div>
<div class="a" style="left:462px;top:93px;width:1px;height:14px;background:#e8eef8"></div>
<div class="cell" style="left:463px;top:93px;width:79px;padding-left:3px;padding-top:0;">-68/-68</div>
<div class="a" style="left:542px;top:93px;width:1px;height:14px;background:#e8eef8"></div>
<div class="cell" style="left:543px;top:93px;width:64px;padding-left:3px;padding-top:0;">60.0Mbps...</div>
<div class="a" style="left:607px;top:93px;width:1px;height:14px;background:#e8eef8"></div>
<div class="a" style="left:3px;top:344px;width:1px;height:18px;background:#a8a8a8"></div>
<div class="t" style="left:7px;top:346px">1 item (1 selected)</div>
</div>
<div class="win" style="left:257px;top:367px;width:471px;height:502px">
<div class="tb" style="background:#5050c8"><div class="t" style="left:5px;top:7px;letter-spacing:-0.55px">Ping (Running)</div></div>
<div class="tbtn" style="left:433px;top:4px;width:14px;height:14px;border:1px solid #fff;box-shadow:none;"><svg class="a" style="left:2px;top:1px" width="9" height="9"><rect x="0.5" y="1" width="8" height="7.5" fill="none" stroke="#000" stroke-width="1"/><rect x="0" y="0" width="9" height="2" fill="#000"/></svg></div><div class="tbtn" style="left:449px;top:4px;width:14px;height:14px;border:1px solid #fff;box-shadow:none;"><svg class="a" style="left:2px;top:1px" width="9" height="9"><path d="M1 1.5 L8 8 M8 1.5 L1 8" stroke="#000" stroke-width="2"/></svg></div>
<div class="a" style="left:1px;top:45px;width:370px;height:182px;border:1px solid #a0a0a0;border-left-color:#fff;border-top-color:#fff;background:#f0f0f0"></div>
<div class="tabsel" style="left:2px;top:23px;width:51px;height:23px;padding-top:4px">General</div>
<div class="tab" style="left:54px;top:26px;width:59px">Advanced</div>
<div class="t r" style="left:3px;width:74px;top:57px">Ping To:</div>
<div class="fld fldw" style="left:84px;top:53px;width:278px"><span style="background:#3399ff;color:#fff;display:inline-block;height:14px;margin:-1px 0 0 -1px;padding:1px 1px 0 1px">192.168.25.254</span></div>
<div class="t r" style="left:3px;width:74px;top:82px">Interface:</div>
<div class="fld" style="left:84px;top:78px;width:260px"></div>
<svg class="a" style="left:349px;top:85px" width="9" height="5"><path d="M0 0 L9 0 L4.5 5 Z" fill="#000"/></svg>
<div class="a" style="left:84px;top:104px;width:12px;height:12px;background:#fff;border:1px solid #8e8f8f"></div>
<div class="t" style="left:102px;top:105px">ARP Ping</div>
<div class="t r" style="left:3px;width:74px;top:127px">Packet Count:</div>
<div class="fld" style="left:84px;top:123px;width:260px"></div>
<svg class="a" style="left:349px;top:130px" width="9" height="5"><path d="M0 0 L9 0 L4.5 5 Z" fill="#000"/></svg>
<div class="t r" style="left:3px;width:74px;top:153px">Timeout:</div>
<div class="fld fldw" style="left:84px;top:149px;width:258px">1000</div>
<div class="t" style="left:345px;top:153px">ms</div>
<div class="btn" style="left:376px;top:28px;width:83px;height:23px;padding-top:5px;">Start</div>
<div class="btn" style="left:376px;top:54px;width:83px;height:23px;padding-top:5px;border-color:#000;box-shadow:inset 1px 1px 0 #fff,inset -1px -1px 0 #000;">Stop</div>
<div class="btn" style="left:376px;top:80px;width:83px;height:23px;padding-top:5px;">Close</div>
<div class="btn" style="left:376px;top:112px;width:83px;height:23px;padding-top:5px;">New Window</div>
<div class="a" style="left:2px;top:233px;width:463px;height:244px;border:1px solid #9c9c9c;background:#fff"></div>
<div class="a" style="left:3px;top:234px;width:461px;height:17px;background:#f0f0f0;border-bottom:1px solid #a0a0a0"></div>
<div class="hdr" style="left:3px;top:234px;width:4px;padding-top:3px"></div>
<div class="hdr" style="left:7px;top:234px;width:44px;padding-top:3px">Seq #</div>
<div class="hdr" style="left:51px;top:234px;width:150px;padding-top:3px">Host</div>
<div class="hdr" style="left:201px;top:234px;width:50px;padding-top:3px">Time</div>
<div class="hdr" style="left:251px;top:234px;width:60px;padding-top:3px">Reply Size</div>
<div class="hdr" style="left:311px;top:234px;width:35px;padding-top:3px">TTL</div>
<div class="hdr" style="left:346px;top:234px;width:100px;padding-top:3px">Status</div>
<svg class="a" style="left:451px;top:240px" width="9" height="5"><path d="M0 0 L9 0 L4.5 5 Z" fill="#000"/></svg>
<svg class="a" style="left:38px;top:239px" width="8" height="7"><path d="M0.5 6.5 L7.5 6.5 L4 0.5" fill="none" stroke="#fff" stroke-width="1"/><path d="M0.5 6.5 L4 0.5" fill="none" stroke="#909090" stroke-width="1"/></svg>
<div class="a" style="left:3px;top:265px;width:444px;height:1px;background:#e8e8e8"></div>
<div class="cell r" style="left:7px;top:251px;width:41px">30</div>
<div class="cell" style="left:53px;top:251px;width:140px">192.168.25.254</div>
<div class="cell" style="left:203px;top:251px;width:40px">2ms</div>
<div class="cell r" style="left:251px;top:251px;width:57px">50</div>
<div class="cell r" style="left:311px;top:251px;width:32px">64</div>
<div class="a" style="left:3px;top:280px;width:444px;height:1px;background:#e8e8e8"></div>
<div class="cell r" style="left:7px;top:266px;width:41px">31</div>
<div class="cell" style="left:53px;top:266px;width:140px">192.168.25.254</div>
<div class="cell" style="left:203px;top:266px;width:40px">7ms</div>
<div class="cell r" style="left:251px;top:266px;width:57px">50</div>
<div class="cell r" style="left:311px;top:266px;width:32px">64</div>
<div class="a" style="left:3px;top:295px;width:444px;height:1px;background:#e8e8e8"></div>
<div class="cell r" style="left:7px;top:281px;width:41px">32</div>
<div class="cell" style="left:53px;top:281px;width:140px">192.168.25.254</div>
<div class="cell" style="left:203px;top:281px;width:40px">3ms</div>
<div class="cell r" style="left:251px;top:281px;width:57px">50</div>
<div class="cell r" style="left:311px;top:281px;width:32px">64</div>
<div class="a" style="left:3px;top:310px;width:444px;height:1px;background:#e8e8e8"></div>
<div class="cell r" style="left:7px;top:296px;width:41px">33</div>
<div class="cell" style="left:53px;top:296px;width:140px">192.168.25.254</div>
<div class="cell" style="left:203px;top:296px;width:40px">5ms</div>
<div class="cell r" style="left:251px;top:296px;width:57px">50</div>
<div class="cell r" style="left:311px;top:296px;width:32px">64</div>
<div class="a" style="left:3px;top:325px;width:444px;height:1px;background:#e8e8e8"></div>
<div class="cell r" style="left:7px;top:311px;width:41px">34</div>
<div class="cell" style="left:53px;top:311px;width:140px">192.168.25.254</div>
<div class="cell" style="left:203px;top:311px;width:40px">9ms</div>
<div class="cell r" style="left:251px;top:311px;width:57px">50</div>
<div class="cell r" style="left:311px;top:311px;width:32px">64</div>
<div class="a" style="left:3px;top:340px;width:444px;height:1px;background:#e8e8e8"></div>
<div class="cell r" style="left:7px;top:326px;width:41px">35</div>
<div class="cell" style="left:53px;top:326px;width:140px">192.168.25.254</div>
<div class="cell" style="left:203px;top:326px;width:40px">2ms</div>
<div class="cell r" style="left:251px;top:326px;width:57px">50</div>
<div class="cell r" style="left:311px;top:326px;width:32px">64</div>
<div class="a" style="left:3px;top:355px;width:444px;height:1px;background:#e8e8e8"></div>
<div class="cell r" style="left:7px;top:341px;width:41px">36</div>
<div class="cell" style="left:53px;top:341px;width:140px">192.168.25.254</div>
<div class="cell" style="left:203px;top:341px;width:40px">10ms</div>
<div class="cell r" style="left:251px;top:341px;width:57px">50</div>
<div class="cell r" style="left:311px;top:341px;width:32px">64</div>
<div class="a" style="left:3px;top:370px;width:444px;height:1px;background:#e8e8e8"></div>
<div class="cell r" style="left:7px;top:356px;width:41px">37</div>
<div class="cell" style="left:53px;top:356px;width:140px">192.168.25.254</div>
<div class="cell" style="left:203px;top:356px;width:40px">5ms</div>
<div class="cell r" style="left:251px;top:356px;width:57px">50</div>
<div class="cell r" style="left:311px;top:356px;width:32px">64</div>
<div class="a" style="left:3px;top:385px;width:444px;height:1px;background:#e8e8e8"></div>
<div class="cell r" style="left:7px;top:371px;width:41px">38</div>
<div class="cell" style="left:53px;top:371px;width:140px">192.168.25.254</div>
<div class="cell" style="left:203px;top:371px;width:40px">4ms</div>
<div class="cell r" style="left:251px;top:371px;width:57px">50</div>
<div class="cell r" style="left:311px;top:371px;width:32px">64</div>
<div class="a" style="left:3px;top:400px;width:444px;height:1px;background:#e8e8e8"></div>
<div class="cell r" style="left:7px;top:386px;width:41px">39</div>
<div class="cell" style="left:53px;top:386px;width:140px">192.168.25.254</div>
<div class="cell" style="left:203px;top:386px;width:40px">2ms</div>
<div class="cell r" style="left:251px;top:386px;width:57px">50</div>
<div class="cell r" style="left:311px;top:386px;width:32px">64</div>
<div class="a" style="left:3px;top:415px;width:444px;height:1px;background:#e8e8e8"></div>
<div class="cell r" style="left:7px;top:401px;width:41px">40</div>
<div class="cell" style="left:53px;top:401px;width:140px">192.168.25.254</div>
<div class="cell" style="left:203px;top:401px;width:40px">3ms</div>
<div class="cell r" style="left:251px;top:401px;width:57px">50</div>
<div class="cell r" style="left:311px;top:401px;width:32px">64</div>
<div class="a" style="left:3px;top:430px;width:444px;height:1px;background:#e8e8e8"></div>
<div class="cell r" style="left:7px;top:416px;width:41px">41</div>
<div class="cell" style="left:53px;top:416px;width:140px">192.168.25.254</div>
<div class="cell" style="left:203px;top:416px;width:40px">4ms</div>
<div class="cell r" style="left:251px;top:416px;width:57px">50</div>
<div class="cell r" style="left:311px;top:416px;width:32px">64</div>
<div class="a" style="left:3px;top:445px;width:444px;height:1px;background:#e8e8e8"></div>
<div class="cell r" style="left:7px;top:431px;width:41px">42</div>
<div class="cell" style="left:53px;top:431px;width:140px">192.168.25.254</div>
<div class="cell" style="left:203px;top:431px;width:40px">2ms</div>
<div class="cell r" style="left:251px;top:431px;width:57px">50</div>
<div class="cell r" style="left:311px;top:431px;width:32px">64</div>
<div class="a" style="left:3px;top:460px;width:444px;height:1px;background:#e8e8e8"></div>
<div class="cell r" style="left:7px;top:446px;width:41px">43</div>
<div class="cell" style="left:53px;top:446px;width:140px">192.168.25.254</div>
<div class="cell" style="left:203px;top:446px;width:40px">5ms</div>
<div class="cell r" style="left:251px;top:446px;width:57px">50</div>
<div class="cell r" style="left:311px;top:446px;width:32px">64</div>
<div class="a" style="left:3px;top:475px;width:444px;height:1px;background:#e8e8e8"></div>
<div class="cell r" style="left:7px;top:461px;width:41px">44</div>
<div class="cell" style="left:53px;top:461px;width:140px">192.168.25.254</div>
<div class="cell" style="left:203px;top:461px;width:40px">2ms</div>
<div class="cell r" style="left:251px;top:461px;width:57px">50</div>
<div class="cell r" style="left:311px;top:461px;width:32px">64</div>
<div class="a" style="left:6px;top:251px;width:1px;height:225px;background:#e8e8e8"></div>
<div class="a" style="left:50px;top:251px;width:1px;height:225px;background:#e8e8e8"></div>
<div class="a" style="left:200px;top:251px;width:1px;height:225px;background:#e8e8e8"></div>
<div class="a" style="left:250px;top:251px;width:1px;height:225px;background:#e8e8e8"></div>
<div class="a" style="left:310px;top:251px;width:1px;height:225px;background:#e8e8e8"></div>
<div class="a" style="left:345px;top:251px;width:1px;height:225px;background:#e8e8e8"></div>
<div class="a" style="left:445px;top:251px;width:1px;height:225px;background:#e8e8e8"></div>
<div class="a" style="left:448px;top:251px;width:16px;height:225px;background:#f0f0f0"></div>
<div class="a" style="left:449px;top:267px;width:14px;height:128px;background:#cdcdcd;border:1px solid #b4b4b4"></div>
<div class="a" style="left:449px;top:251px;width:15px;height:15px;border:1px solid #dcdcdc;border-right-color:#a8a8a8;border-bottom-color:#a8a8a8;background:#f0f0f0"></div>
<div class="a" style="left:449px;top:461px;width:15px;height:15px;border:1px solid #dcdcdc;border-right-color:#a8a8a8;border-bottom-color:#a8a8a8;background:#f0f0f0"></div>
<svg class="a" style="left:452px;top:255px" width="8" height="8"><path d="M4 0 L8 4 L6 4 L6 7 L2 7 L2 4 L0 4 Z" fill="#000"/></svg>
<svg class="a" style="left:452px;top:464px" width="8" height="8"><path d="M4 8 L8 4 L6 4 L6 1 L2 1 L2 4 L0 4 Z" fill="#000"/></svg>
<div class="a" style="left:2px;top:478px;width:53px;height:18px;border-left:1px solid #b0b0b0;border-right:1px solid #fff;padding:3px 0 0 2px;white-space:nowrap;overflow:hidden">45 items</div>
<div class="a" style="left:57px;top:478px;width:105px;height:18px;border-left:1px solid #b0b0b0;border-right:1px solid #fff;padding:3px 0 0 2px;white-space:nowrap;overflow:hidden">45 of 45 packets re...</div>
<div class="a" style="left:164px;top:478px;width:94px;height:18px;border-left:1px solid #b0b0b0;border-right:1px solid #fff;padding:3px 0 0 2px;white-space:nowrap;overflow:hidden">0% packet loss</div>
<div class="a" style="left:260px;top:478px;width:64px;height:18px;border-left:1px solid #b0b0b0;border-right:1px solid #fff;padding:3px 0 0 2px;white-space:nowrap;overflow:hidden">Min: 1 ms</div>
<div class="a" style="left:326px;top:478px;width:64px;height:18px;border-left:1px solid #b0b0b0;border-right:1px solid #fff;padding:3px 0 0 2px;white-space:nowrap;overflow:hidden">Avg: 3 ms</div>
<div class="a" style="left:392px;top:478px;width:73px;height:18px;border-left:1px solid #b0b0b0;border-right:1px solid #fff;padding:3px 0 0 2px;white-space:nowrap;overflow:hidden">Max: 11 ms</div>
</div>
<div class="a" style="left:136px;top:50px;width:1632px;height:1px;background:#6c6c6c"></div><div class="a" style="left:0;top:49px;width:1768px;height:1px;background:#fafafa"></div><div class="a" style="left:0;top:22px;width:1768px;height:1px;background:#f6f7fa"></div>
<div class="a" style="left:1767px;top:51px;width:1px;height:901px;background:#e4e4e4"></div>
<svg class="a" style="left:1743px;top:846px" width="25" height="56" viewBox="0 0 25 56"><path d="M25 1.5 L5 1.5 Q1.5 1.5 1.5 5 L1.5 33 Q1.5 36 4 37.6 L25 52 Z" fill="#f4f4f4" stroke="#c4c4c4" stroke-width="1"/><rect x="5.5" y="6.5" width="17.5" height="20" rx="2" fill="#1478e0" transform="skewY(4) translate(0,-0.8)"/><circle cx="14.5" cy="17.5" r="6.3" fill="#f6f8fb"/><path d="M9.5 17.5 L12.7 14.9 L12.7 16.6 L16.3 16.6 L16.3 14.9 L19.5 17.5 L16.3 20.1 L16.3 18.4 L12.7 18.4 L12.7 20.1 Z" fill="#1478e0"/></svg>
<div class="a" style="left:0;top:952px;width:1768px;height:8px;background:linear-gradient(90deg,#7f99bc 0,#8da8cc 60px,#a9c2e3 200px,#a7c1e3 1535px,#7a8eae 1580px,#72869f 1752px,#72869f)"></div>
<div class="a" style="left:0;top:952px;width:1768px;height:1px;background:#56607a"></div>
<div class="a" style="left:0;top:953px;width:1768px;height:1px;background:rgba(255,255,255,.35)"></div>
<div class="a" style="left:11px;top:954px;width:30px;height:30px;border-radius:15px;border:1px solid #e0ecf8;background:#8ca6c8"></div>
<div class="t" style="left:58px;top:953px;font-size:8px;line-height:8px;color:#2a3344;letter-spacing:0.5px">...</div>
<div class="a" style="left:159px;top:957px;width:15px;height:10px;border-radius:7px;background:#e8503c"></div>
<div class="a" style="left:199px;top:953px;width:59px;height:10px;border:1px solid #5a6880;border-radius:3px 3px 0 0;background:#e6eef8"></div>
<div class="a" style="left:219px;top:955px;width:20px;height:20px;border-radius:10px;background:#8cc63c"></div>
<div class="a" style="left:261px;top:953px;width:59px;height:10px;border:1px solid #5a6880;border-radius:3px 3px 0 0;background:#e6eef8"></div>
<div class="a" style="left:281px;top:955px;width:20px;height:20px;border-radius:10px;background:#5a9ae0"></div>
<div class="t" style="left:1580px;top:953px;font-size:8px;line-height:8px;color:#1a2233;letter-spacing:0.5px">...</div>
<div class="a" style="left:1753px;top:953px;width:15px;height:7px;border:1px solid #c8d0dc;background:#8a94a4"></div>
</body></html>
